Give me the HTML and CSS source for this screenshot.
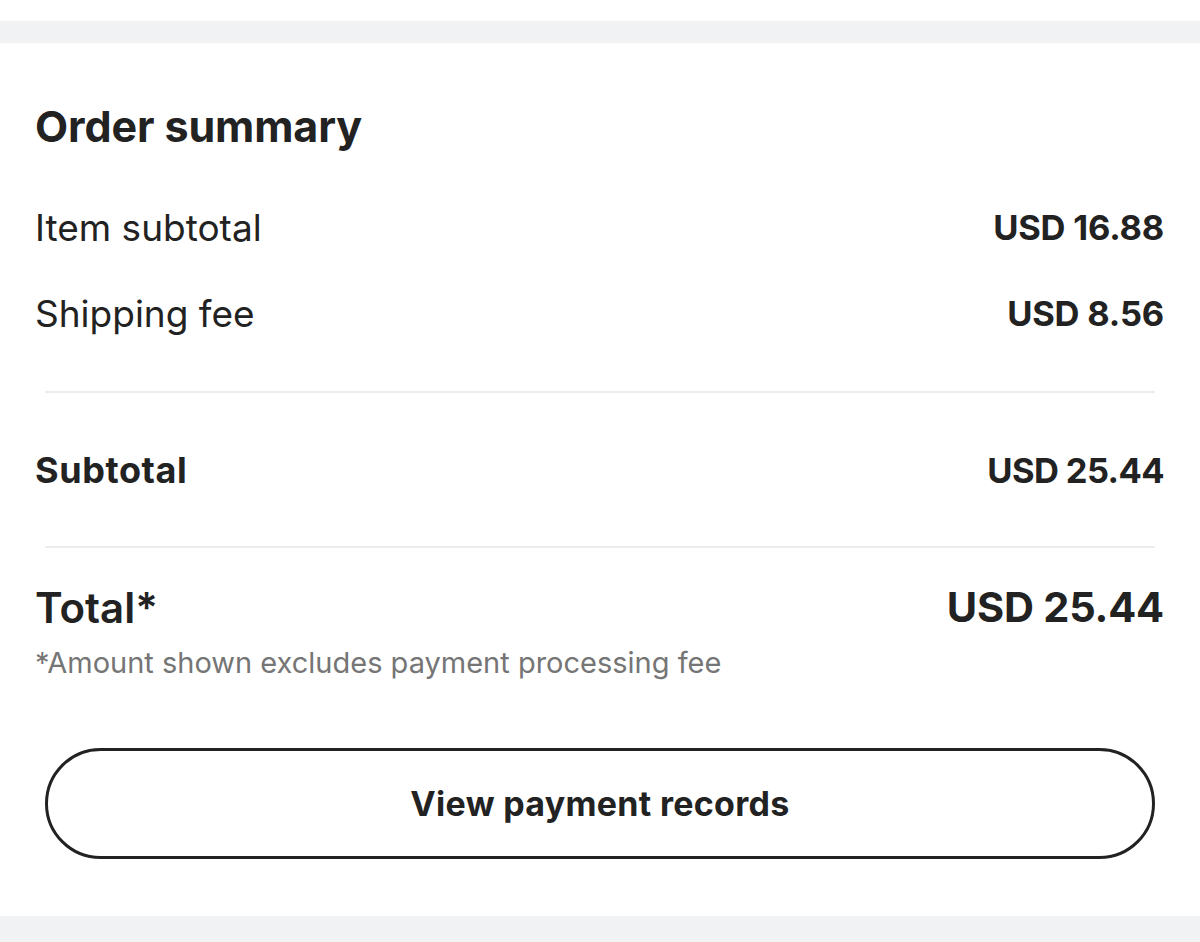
FILE: index.html
```html
<!DOCTYPE html>
<html lang="en">
<head>
<meta charset="utf-8">
<title>Order summary</title>
<link rel="stylesheet" href="styles.css">
</head>
<body>
  <div class="top-space"></div>
  <div class="band"></div>
  <section class="card">
    <h2 class="title">Order summary</h2>
    <div class="rows">
      <div class="row"><span class="label">Item subtotal</span><span class="value">USD 16.88</span></div>
      <div class="row"><span class="label">Shipping fee</span><span class="value">USD 8.56</span></div>
    </div>
    <hr class="divider">
    <div class="row subtotal"><span class="label strong">Subtotal</span><span class="value">USD 25.44</span></div>
    <hr class="divider">
    <div class="total">
      <div class="row total-row"><span class="label total-label">Total*</span><span class="value total-value">USD 25.44</span></div>
      <p class="note">*Amount shown excludes payment processing fee</p>
    </div>
    <button class="records-btn" type="button">View payment records</button>
  </section>
  <div class="band bottom"></div>
</body>
</html>
```

FILE: styles.css
```css
* { box-sizing: border-box; }
html, body { margin: 0; padding: 0; background: #ffffff; }
body {
  font-family: Inter, "Noto Sans", "Liberation Sans", sans-serif;
  color: #222222;
  width: 1200px;
  height: 942px;
  overflow: hidden;
}
.top-space { height: 21px; background: #ffffff; }
.band { height: 22px; background: #f1f2f4; }
.band.bottom { height: 26px; }
.card {
  height: 873px;
  padding: 0 36px 0 35px;
  display: flex;
  flex-direction: column;
}
.title {
  margin: 58px 0 0;
  font-size: 43px;
  line-height: 50px;
  font-weight: 700;
  letter-spacing: -0.1px;
}
.rows { margin-top: 56px; display: flex; flex-direction: column; gap: 46px; }
.row {
  display: flex;
  justify-content: space-between;
  align-items: center;
  height: 40px;
}
.label { font-size: 37px; font-weight: 400; }
.label.strong { font-size: 36px; font-weight: 700; letter-spacing: 0.6px; }
.value { font-size: 34.5px; font-weight: 700; letter-spacing: -0.2px; }
.subtotal .value { letter-spacing: -0.6px; }
.divider {
  margin: 58px 9px 0 10px;
  border: 0;
  border-top: 2px solid #ececec;
}
.subtotal { margin-top: 57px; }
.subtotal + .divider { margin-top: 56px; }
.total { margin-top: 36px; }
.total-row { height: 46px; }
.total-label { font-size: 42px; font-weight: 600; }
.total-value { font-size: 41.5px; font-weight: 700; }
.note {
  margin: 16px 0 0;
  font-size: 29px;
  line-height: 34px;
  color: #757575;
}
.records-btn {
  margin: 68px 9px 0 10px;
  height: 111px;
  border: 3px solid #222222;
  border-radius: 56px;
  background: #ffffff;
  font-family: inherit;
  font-size: 34px;
  font-weight: 700;
  letter-spacing: 0.3px;
  color: #222222;
}
```
